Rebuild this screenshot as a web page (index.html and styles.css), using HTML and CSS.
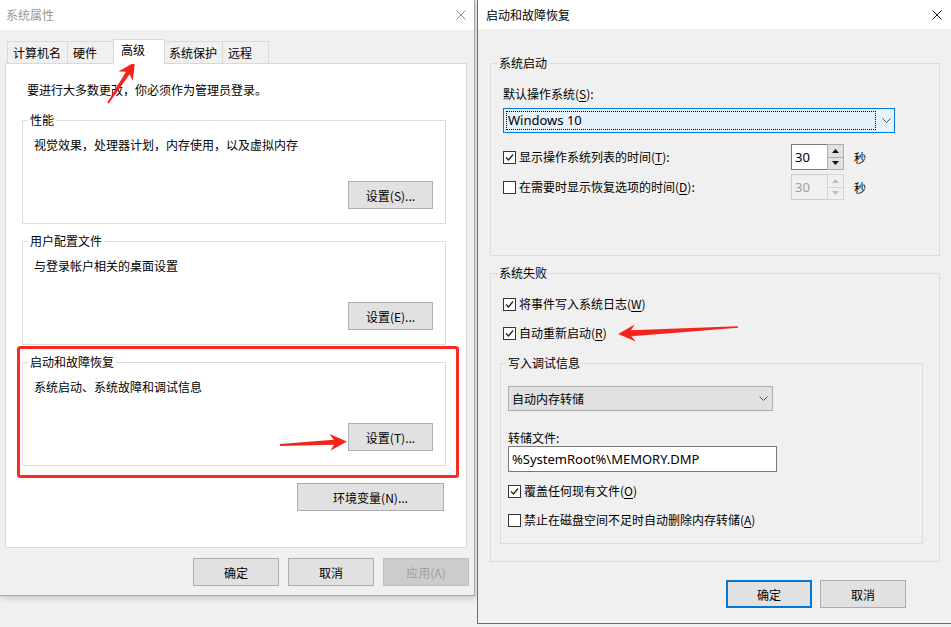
FILE: index.html
```html
<!DOCTYPE html>
<html lang="zh-CN">
<head>
  <meta charset="UTF-8">
  <title>系统属性 - 启动和故障恢复</title>
  <link rel="stylesheet" href="styles.css">
</head>
<body>
  <div class="dlg sys-props">
    <div class="titlebar inactive">
      <span class="title">系统属性</span>
      <svg class="close" width="10" height="10" viewBox="0 0 10 10"><path d="M0.5 0.5 L9.5 9.5 M9.5 0.5 L0.5 9.5"/></svg>
    </div>
    <div class="dlg-body">
      <div class="tabs">
        <div class="tab t1">计算机名</div>
        <div class="tab t2">硬件</div>
        <div class="tab active">高级</div>
        <div class="tab t4">系统保护</div>
        <div class="tab t5">远程</div>
      </div>
      <div class="tab-panel">
        <div class="intro">要进行大多数更改，你必须作为管理员登录。</div>

        <fieldset class="group">
          <legend>性能</legend>
          <div class="desc">视觉效果，处理器计划，内存使用，以及虚拟内存</div>
          <div class="group-actions"><button class="btn small">设置(S)...</button></div>
        </fieldset>

        <fieldset class="group">
          <legend>用户配置文件</legend>
          <div class="desc">与登录帐户相关的桌面设置</div>
          <div class="group-actions"><button class="btn small">设置(E)...</button></div>
        </fieldset>

        <fieldset class="group">
          <legend>启动和故障恢复</legend>
          <div class="desc">系统启动、系统故障和调试信息</div>
          <div class="group-actions"><button class="btn small">设置(T)...</button></div>
        </fieldset>

        <div class="env-row"><button class="btn wide">环境变量(N)...</button></div>
      </div>
      <div class="dlg-buttons">
        <button class="btn">确定</button>
        <button class="btn">取消</button>
        <button class="btn disabled">应用(A)</button>
      </div>
    </div>
  </div>

  <div class="dlg startup">
    <div class="titlebar">
      <span class="title">启动和故障恢复</span>
      <svg class="close" width="10" height="10" viewBox="0 0 10 10"><path d="M0.5 0.5 L9.5 9.5 M9.5 0.5 L0.5 9.5"/></svg>
    </div>
    <div class="dlg-body">
      <fieldset class="group boot">
        <legend>系统启动</legend>
        <div class="field-label">默认操作系统(<u>S</u>):</div>
        <div class="combo focused">
          <span class="focus-rect">Windows 10</span>
          <svg class="chevron" width="9" height="5" viewBox="0 0 9 5"><path d="M0.5 0.5 L4.5 4.5 L8.5 0.5"/></svg>
        </div>
        <div class="timer-row first">
          <label class="check">
            <span class="box"><svg width="11" height="11" viewBox="0 0 11 11"><path d="M2 5.5 L4.5 8 L9 2.5"/></svg></span>
            显示操作系统列表的时间(<u>T</u>):
          </label>
          <div class="spin">
            <span class="spin-text">30</span>
            <span class="spin-btns">
              <span class="spin-btn"><svg width="7" height="4" viewBox="0 0 7 4"><path d="M0 4 L3.5 0 L7 4 Z"/></svg></span>
              <span class="spin-btn"><svg width="7" height="4" viewBox="0 0 7 4"><path d="M0 0 L3.5 4 L7 0 Z"/></svg></span>
            </span>
          </div>
          <span class="unit">秒</span>
        </div>
        <div class="timer-row">
          <label class="check">
            <span class="box"></span>
            在需要时显示恢复选项的时间(<u>D</u>):
          </label>
          <div class="spin disabled">
            <span class="spin-text">30</span>
            <span class="spin-btns">
              <span class="spin-btn"><svg width="7" height="4" viewBox="0 0 7 4"><path d="M0 4 L3.5 0 L7 4 Z"/></svg></span>
              <span class="spin-btn"><svg width="7" height="4" viewBox="0 0 7 4"><path d="M0 0 L3.5 4 L7 0 Z"/></svg></span>
            </span>
          </div>
          <span class="unit">秒</span>
        </div>
      </fieldset>

      <fieldset class="group failure">
        <legend>系统失败</legend>
        <label class="check row">
          <span class="box"><svg width="11" height="11" viewBox="0 0 11 11"><path d="M2 5.5 L4.5 8 L9 2.5"/></svg></span>
          将事件写入系统日志(<u>W</u>)
        </label>
        <label class="check row">
          <span class="box"><svg width="11" height="11" viewBox="0 0 11 11"><path d="M2 5.5 L4.5 8 L9 2.5"/></svg></span>
          自动重新启动(<u>R</u>)
        </label>

        <fieldset class="group debug">
          <legend>写入调试信息</legend>
          <div class="combo plain">
            <span class="combo-text">自动内存转储</span>
            <svg class="chevron" width="9" height="5" viewBox="0 0 9 5"><path d="M0.5 0.5 L4.5 4.5 L8.5 0.5"/></svg>
          </div>
          <div class="field-label dump">转储文件:</div>
          <div class="textbox">%SystemRoot%\MEMORY.DMP</div>
          <label class="check row">
            <span class="box"><svg width="11" height="11" viewBox="0 0 11 11"><path d="M2 5.5 L4.5 8 L9 2.5"/></svg></span>
            覆盖任何现有文件(<u>O</u>)
          </label>
          <label class="check row">
            <span class="box"></span>
            禁止在磁盘空间不足时自动删除内存转储(<u>A</u>)
          </label>
        </fieldset>
      </fieldset>

      <div class="dlg-buttons">
        <button class="btn default">确定</button>
        <button class="btn">取消</button>
      </div>
    </div>
  </div>

  <!-- red annotations drawn over the screenshot -->
  <svg class="annotations" width="951" height="627" viewBox="0 0 951 627">
    <rect x="18.5" y="347.5" width="439" height="129" rx="2"/>
    <polygon transform="translate(108 103) rotate(-56.6)" points="0,-0.8 36,-2.2 32,-8.5 49,0 32,8.5 36,2.2 0,0.8"/>
    <polygon transform="translate(280 445) rotate(-3)" points="0,-1 54,-2.5 50,-8.5 67,0 50,8.5 54,2.5 0,1"/>
    <polygon transform="translate(738 327) rotate(176.7)" points="0,-0.8 107,-3 103,-8.5 120,0 103,8.5 107,3 0,0.8"/>
  </svg>
</body>
</html>
```

FILE: styles.css
```css
* {
  box-sizing: border-box;
}

body {
  margin: 0;
  height: 627px;
  overflow: hidden;
  display: flex;
  align-items: flex-start;
  background-color: #f0f0f0;
  font-family: "Noto Sans CJK SC", "Noto Sans", sans-serif;
  font-size: 12px;
  color: #000;
  position: relative;
}

u {
  text-decoration: underline;
  text-underline-offset: 2px;
}

/* dialogs */

.dlg {
  background-color: #f0f0f0;
  display: flex;
  flex-direction: column;
}

.sys-props {
  width: 475px;
  height: 596px;
  border-right: 1px solid #a8a8a8;
  border-bottom: 1px solid #a8a8a8;
  box-shadow: 1px 2px 6px rgba(0, 0, 0, 0.18);
}

.startup {
  width: 474px;
  height: 624px;
  margin-left: 2px;
  border-left: 1px solid #6d6d6d;
  border-bottom: 1px solid #6d6d6d;
}

.titlebar {
  height: 30px;
  background-color: #fff;
  display: flex;
  align-items: center;
  justify-content: space-between;
  padding: 0 8px 0 6px;
  line-height: 16px;
}

.startup .titlebar {
  height: 29px;
  padding: 0 9px 0 8px;
}

.titlebar.inactive .title {
  color: #9a9a9a;
}

.close path {
  stroke: #1a1a1a;
  stroke-width: 1;
  fill: none;
}

.titlebar.inactive .close path {
  stroke: #8c8c8c;
}

.sys-props .dlg-body {
  padding: 9px 0 0 5px;
}

.startup .dlg-body {
  padding: 26px 11px 0 12px;
}

/* tabs */

.tabs {
  display: flex;
  align-items: flex-end;
  height: 24px;
  padding-left: 2px;
}

.tab {
  height: 22px;
  border: 1px solid #d9d9d9;
  border-bottom: 0;
  padding-left: 5px;
  line-height: 21px;
  background-color: #f0f0f0;
  white-space: nowrap;
}

.tab.t1 { width: 61px; }
.tab.t2 { width: 48px; margin-left: -1px; }
.tab.t4 { width: 60px; margin-left: -2px; }
.tab.t5 { width: 47px; margin-left: -1px; }

.tab.active {
  width: 52px;
  height: 25px;
  margin-left: -2px;
  margin-bottom: -1px;
  padding-left: 7px;
  line-height: 20px;
  background-color: #fff;
  position: relative;
  z-index: 1;
}

.tab-panel {
  width: 462px;
  height: 485px;
  border: 1px solid #d9d9d9;
  background-color: #fff;
  padding: 0 20px 0 16px;
}

.intro {
  margin: 18px 0 0 5px;
  line-height: 16px;
}

/* group boxes */

.group {
  margin: 0;
  min-width: 0;
  border: 1px solid #dcdcdc;
  padding: 9px 12px 14px 11px;
}

.group legend {
  padding: 0 2px;
  margin-left: -6px;
  line-height: 16px;
}

.tab-panel .group {
  margin-top: 9px;
}

.tab-panel .intro + .group {
  margin-top: 14px;
}

.desc {
  line-height: 16px;
  height: 16px;
}

.group-actions {
  display: flex;
  justify-content: flex-end;
  margin-top: 28px;
}

.env-row {
  display: flex;
  justify-content: flex-end;
  margin-top: 17px;
  padding-right: 2px;
}

/* buttons */

.btn {
  width: 86px;
  height: 28px;
  padding: 0;
  border: 1px solid #adadad;
  background-color: #e1e1e1;
  font-family: inherit;
  font-size: 12px;
  color: #000;
}

.btn.small {
  width: 85px;
}

.btn.wide {
  width: 147px;
}

.btn.disabled {
  background-color: #cccccc;
  border-color: #bfbfbf;
  color: #a0a0a0;
}

.btn.default {
  border: 2px solid #0078d7;
}

.dlg-buttons {
  display: flex;
  justify-content: flex-end;
  gap: 9px;
}

.sys-props .dlg-buttons {
  margin-top: 10px;
  padding-right: 5px;
}

.startup .dlg-buttons {
  margin-top: 18px;
  padding-right: 34px;
  gap: 8px;
}

/* startup dialog */

.boot {
  padding: 15px 12px 55px 12px;
}

.failure {
  margin-top: 9px;
  padding: 13px 12px 17px 12px;
}

.debug {
  margin: 12px 0 0 -3px;
  width: 423px;
  padding: 15px 7px 13px 7px;
}

.debug legend {
  margin-left: -2px;
}

.field-label {
  line-height: 16px;
}

.field-label.dump {
  margin-top: 19px;
}

.combo {
  display: flex;
  align-items: center;
  height: 25px;
}

.combo.focused {
  width: 392px;
  margin-top: 6px;
  border: 1px solid #0078d7;
  background-color: #e5f1fb;
  padding: 2px;
}

.focus-rect {
  width: 370px;
  height: 19px;
  border: 1px dotted #000;
  padding-left: 1px;
  line-height: 17px;
  font-family: "Noto Sans", sans-serif;
  font-size: 13px;
}

.combo.focused .chevron {
  margin-left: 6px;
}

.combo.plain {
  width: 265px;
  border: 1px solid #adadad;
  background-color: #e1e1e1;
  padding: 0 4px 0 3px;
  justify-content: space-between;
}

.chevron path {
  stroke: #555;
  stroke-width: 1;
  fill: none;
}

.textbox {
  width: 269px;
  height: 26px;
  border: 1px solid #7a7a7a;
  background-color: #fff;
  padding-left: 3px;
  line-height: 24px;
  font-family: "Noto Sans", sans-serif;
  font-size: 13px;
}

/* checkboxes */

.check {
  display: flex;
  align-items: center;
  white-space: nowrap;
  line-height: 16px;
}

.check.row {
  height: 20px;
  margin-top: 9px;
}

.failure > .check.row:first-of-type {
  margin-top: 0;
}

.box {
  width: 13px;
  height: 13px;
  margin-right: 3px;
  border: 1px solid #333;
  background-color: #fff;
  display: flex;
  align-items: center;
  justify-content: center;
}

.box path {
  stroke: #222;
  stroke-width: 1.3;
  fill: none;
}

/* timeout rows */

.timer-row {
  display: flex;
  align-items: center;
  height: 26px;
  margin-top: 4px;
}

.timer-row.first {
  margin-top: 11px;
}

.timer-row .check {
  width: 288px;
}

.spin {
  width: 53px;
  height: 26px;
  display: flex;
}

.spin-text {
  flex: 1;
  border: 1px solid #7a7a7a;
  border-right: 0;
  background-color: #fff;
  padding-left: 3px;
  line-height: 24px;
  font-family: "Noto Sans", sans-serif;
  font-size: 13px;
}

.spin-btns {
  width: 17px;
  display: flex;
  flex-direction: column;
}

.spin-btn {
  flex: 1;
  border: 1px solid #adadad;
  background-color: #e1e1e1;
  display: flex;
  align-items: center;
  justify-content: center;
}

.spin-btn + .spin-btn {
  border-top: 0;
}

.spin-btn path {
  fill: #111;
}

.spin.disabled .spin-text {
  border-color: #cccccc;
  background-color: #f0f0f0;
  color: #a0a0a0;
}

.spin.disabled .spin-btn {
  border-color: #d5d5d5;
  background-color: #f0f0f0;
}

.spin.disabled .spin-btn path {
  fill: #bdbdbd;
}

.unit {
  margin-left: 10px;
}

/* annotations */

.annotations {
  position: absolute;
  left: 0;
  top: 0;
  pointer-events: none;
}

.annotations rect {
  fill: none;
  stroke: #ff2a1f;
  stroke-width: 3;
}

.annotations polygon {
  fill: #f5231c;
}
```
